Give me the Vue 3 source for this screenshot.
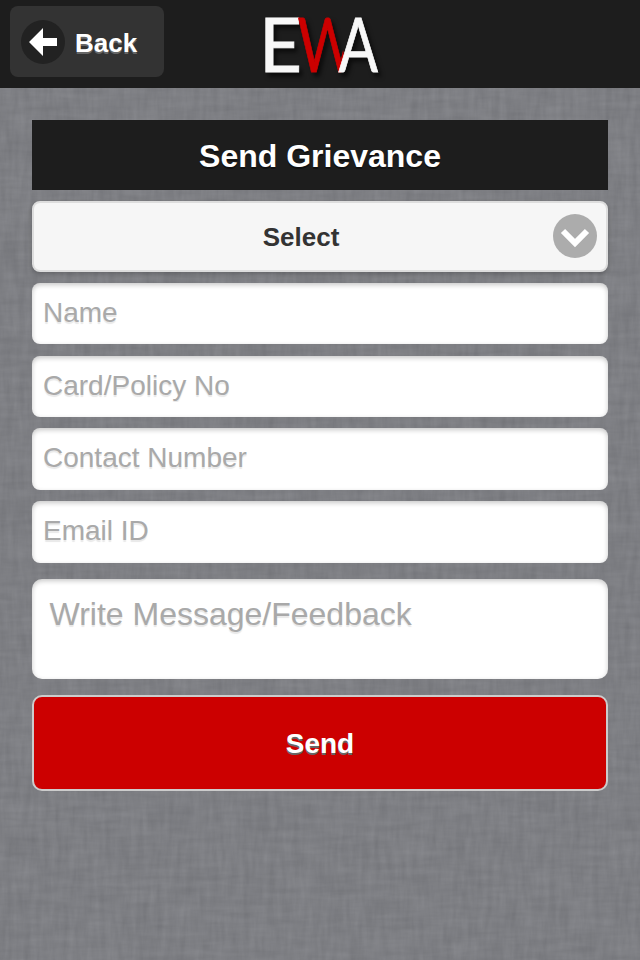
<script setup>
import { ref } from 'vue'

const fields = [
  { name: 'name', label: 'Name', type: 'text' },
  { name: 'card', label: 'Card/Policy No', type: 'text' },
  { name: 'contact', label: 'Contact Number', type: 'tel' },
  { name: 'email', label: 'Email ID', type: 'email' }
]

const form = ref({ name: '', card: '', contact: '', email: '', message: '' })
</script>

<template>
  <div class="page">
    <!-- linen texture: horizontal and vertical threads -->
    <svg class="linen" width="640" height="960" aria-hidden="true">
      <filter id="threads-h" x="0" y="0" width="100%" height="100%" color-interpolation-filters="sRGB">
        <feTurbulence type="fractalNoise" baseFrequency="0.025 0.16" numOctaves="3" seed="4" />
        <feColorMatrix values="0.11 0 0 0 0.439  0.11 0 0 0 0.443  0.11 0 0 0 0.461  0 0 0 0 1" />
      </filter>
      <filter id="threads-v" x="0" y="0" width="100%" height="100%" color-interpolation-filters="sRGB">
        <feTurbulence type="fractalNoise" baseFrequency="0.16 0.03" numOctaves="3" seed="9" />
        <feColorMatrix values="0.11 0 0 0 0.439  0.11 0 0 0 0.443  0.11 0 0 0 0.461  0 0 0 0 1" />
      </filter>
      <rect width="640" height="960" filter="url(#threads-h)" />
      <rect width="640" height="960" filter="url(#threads-v)" opacity="0.5" />
    </svg>

    <header class="header">
      <button class="back" type="button">
        <svg class="back-icon" width="44" height="44" viewBox="0 0 44 44">
          <circle cx="22" cy="22" r="22" fill="#222" />
          <path d="M8 22 L22 8 V18 H36 V26 H22 V36 Z" fill="#fff" />
        </svg>
        <span>Back</span>
      </button>
      <svg class="logo" width="130" height="88" viewBox="0 0 130 88">
        <!-- the W ends where the A's left leg begins -->
        <clipPath id="w-clip">
          <path d="M30 0 H78 L80 30 L86 60 L80 80 H30 Z" />
        </clipPath>
        <text x="0" y="71.5" textLength="43" lengthAdjust="spacingAndGlyphs" fill="#f8f8f8" stroke="#f8f8f8">E</text>
        <g clip-path="url(#w-clip)">
          <text x="38.5" y="71.5" textLength="60" lengthAdjust="spacingAndGlyphs" fill="#c00" stroke="#c00">W</text>
        </g>
        <text x="79.5" y="71.5" textLength="39.5" lengthAdjust="spacingAndGlyphs" fill="#f8f8f8" stroke="#f8f8f8">A</text>
      </svg>
    </header>

    <form class="content" @submit.prevent>
      <h1 class="title">Send Grievance</h1>

      <button class="select" type="button">
        <span class="select-label">Select</span>
        <svg width="44" height="44" viewBox="0 0 44 44">
          <circle cx="22" cy="22" r="22" fill="#acacac" />
          <path d="M10 17 L22 29 L34 17" fill="none" stroke="#fff" stroke-width="6" />
        </svg>
      </button>

      <input
        v-for="field in fields"
        :key="field.name"
        v-model="form[field.name]"
        class="field"
        :type="field.type"
        :placeholder="field.label"
      />
      <textarea v-model="form.message" class="field message" placeholder="Write Message/Feedback"></textarea>

      <button class="send" type="submit">Send</button>
    </form>
  </div>
</template>

<style>
body {
  margin: 0;
  background: #7e7f84;
}
</style>

<style scoped>
.page {
  position: relative;
  width: 640px;
  height: 960px;
  overflow: hidden;
  font-family: "Liberation Sans", Helvetica, Arial, sans-serif;
}

.page * {
  box-sizing: border-box;
}

.linen {
  position: absolute;
  inset: 0;
  z-index: -1;
}

button {
  font-family: inherit;
  font-weight: bold;
  margin: 0;
}

.header {
  display: flex;
  align-items: flex-start;
  height: 88px;
  padding: 6px 0 0 10px;
  background: #1d1d1d;
}

.back {
  display: flex;
  align-items: center;
  width: 154px;
  height: 71px;
  padding: 0 0 0 11px;
  border: 0;
  border-radius: 8px;
  background: #333;
  color: #fff;
  font-size: 26px;
  text-shadow: 0 2px 0 #666;
}

.back span {
  margin-left: 10px;
  padding-top: 3px;
}

.logo {
  margin: -6px 0 0 95px;
  overflow: visible;
  font-family: Lato, sans-serif;
  font-size: 75px;
  stroke-width: 0.8px;
  filter: drop-shadow(3px 4px 2px rgba(0, 0, 0, 0.6));
}

.content {
  display: flex;
  flex-direction: column;
  padding: 32px 32px 0;
}

.title {
  height: 70px;
  margin: 0 0 11px;
  background: #1d1d1d;
  color: #fff;
  font-size: 32px;
  line-height: 72px;
  text-align: center;
  text-shadow: 0 2px 0 #111;
}

.select {
  display: flex;
  align-items: center;
  height: 71px;
  margin-bottom: 11px;
  padding: 0 9px 2px 0;
  border: 2px solid #ddd;
  border-radius: 8px;
  background: #f6f6f6;
  color: #333;
  font-size: 26px;
  box-shadow: 0 2px 4px rgba(0, 0, 0, 0.2);
}

.select-label {
  flex: 1;
  padding: 3px 0 0 15px;
  text-align: center;
}

.field {
  flex: none;
  height: 61.45px;
  margin: 0 0 11.25px;
  padding: 0 11px 1.5px;
  border: 0;
  border-radius: 8px;
  outline: none;
  background: #fff;
  box-shadow: inset 0 2px 5px rgba(0, 0, 0, 0.22);
  color: #333;
  font-family: inherit;
  font-size: 28px;
}

.field::placeholder {
  color: #a9a9a9;
  opacity: 1;
  text-shadow: 0 2px 1px #e8e8e8;
}

.message {
  height: 100px;
  margin: 5px 0 16px;
  padding: 17px 17.5px;
  border-radius: 10px;
  font-size: 32px;
  resize: none;
}

.send {
  height: 96px;
  padding: 2px 0 0;
  border: 2px solid #ccc;
  border-radius: 10px;
  background: #c00;
  color: #fff;
  font-size: 28px;
  text-shadow: 0 2px 0 #666;
}
</style>
